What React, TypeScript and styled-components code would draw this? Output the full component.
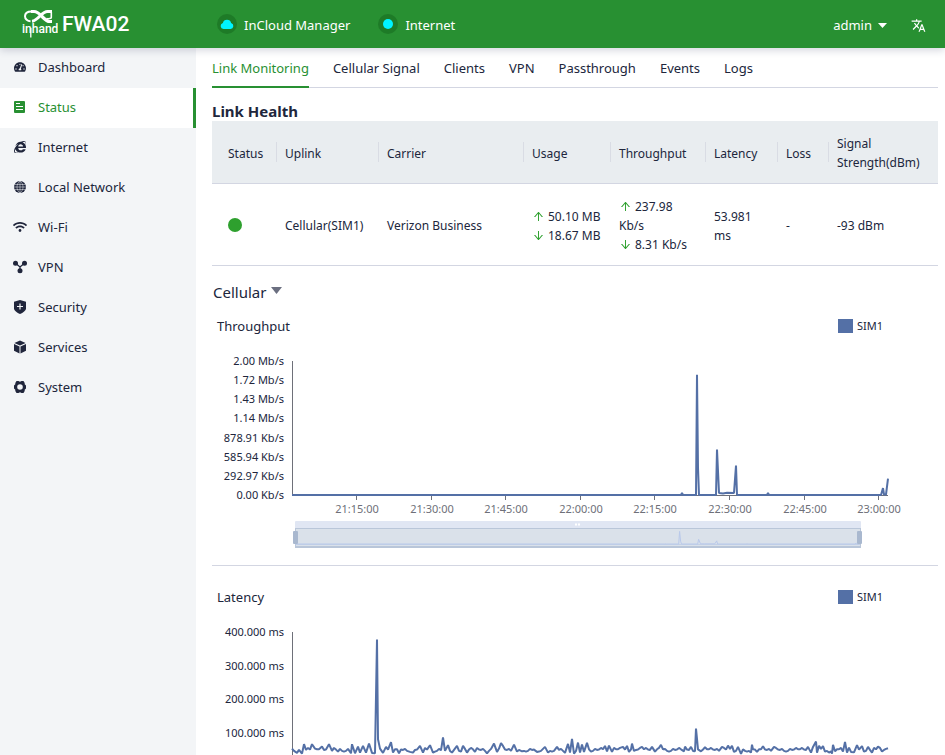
import React, { useLayoutEffect, useRef, useState } from "react";
import styled, { createGlobalStyle } from "styled-components";
import { AiOutlineArrowDown, AiOutlineArrowUp } from "react-icons/ai";
import { FaInternetExplorer, FaTachometerAlt, FaWifi } from "react-icons/fa";
import { MdTranslate } from "react-icons/md";

const color = {
  brand: "#289032",
  brandDark: "#1e7b27",
  cyan: "#00f4ff",
  ink: "#20263c",
  side: "#f3f5f7",
  line: "#d3d6e2",
  head: "#e9edf0",
  series: "#5470a6",
  axis: "#6e7079",
};

const GlobalStyle = createGlobalStyle`
  *, *::before, *::after { box-sizing: border-box; }
  body {
    margin: 0;
    background: #fff;
    color: ${color.ink};
    font: 13px/19px "Noto Sans", sans-serif;
  }
  button { font: inherit; color: inherit; background: none; border: 0; padding: 0; cursor: pointer; }
  a { color: inherit; text-decoration: none; }
`;

const Page = styled.div`
  display: flex;
  flex-direction: column;
  height: 100vh;
`;

const Header = styled.header`
  display: flex;
  align-items: center;
  flex: none;
  height: 48px;
  padding: 0 19px 0 22px;
  background: ${color.brand};
  color: #fff;
  box-shadow: 0 2px 8px rgba(30, 40, 80, 0.2);
  position: relative;
  z-index: 1;
`;

const Brand = styled.a`
  display: flex;
  align-items: center;
  gap: 4px;
  width: 195px;
`;

const Model = styled.span`
  font: 500 21px/24px Roboto, sans-serif;
`;

const Links = styled.div`
  display: flex;
  gap: 28px;
  flex: 1;
`;

const CloudLink = styled.a`
  display: flex;
  align-items: center;
  gap: 7px;
  span { padding-top: 2px; }
`;

const HeaderTools = styled.div`
  display: flex;
  align-items: center;
  gap: 24px;
  padding-top: 2px;
`;

const UserButton = styled.button`
  display: flex;
  align-items: center;
  gap: 6px;
`;

const IconButton = styled.button`
  display: flex;
`;

const Body = styled.div`
  display: flex;
  flex: 1;
  min-height: 0;
`;

const Sidebar = styled.nav`
  flex: none;
  width: 196px;
  background: ${color.side};
`;

const SideItem = styled.a<{ $active?: boolean }>`
  display: flex;
  align-items: center;
  gap: 11px;
  height: 40px;
  padding: 0 0 2px 13px;
  color: ${(p) => (p.$active ? color.brand : color.ink)};
  background: ${(p) => (p.$active ? "#fff" : "transparent")};
  border-right: 3px solid ${(p) => (p.$active ? color.brand : "transparent")};
  svg { flex: none; }
`;

const Main = styled.main`
  flex: 1;
  min-width: 0;
  padding: 0 7px 16px 16px;
  overflow-y: auto;
  scrollbar-width: none;
`;

const Tabs = styled.div`
  display: flex;
  gap: 24px;
  height: 40px;
  border-bottom: 1px solid ${color.line};
`;

const Tab = styled.button<{ $active?: boolean }>`
  height: 40px;
  padding-top: 2px;
  white-space: nowrap;
  color: ${(p) => (p.$active ? color.brand : color.ink)};
  border-bottom: 2px solid ${(p) => (p.$active ? color.brand : "transparent")};
`;

const Title = styled.h1`
  margin: 13px 0 0;
  font-size: 15px;
  line-height: 20px;
  font-weight: 700;
`;

const Table = styled.table`
  width: 100%;
  table-layout: fixed;
  border-collapse: separate;
  border-spacing: 0;
  font-size: 12px;
  text-align: left;
`;

const Th = styled.th`
  height: 63px;
  padding: 2px 8px 0 9px;
  background: linear-gradient(#d9dce4, #d9dce4) left center / 1px 20px no-repeat ${color.head};
  border-bottom: 1px solid ${color.line};
  font-weight: 400;
  &:first-child { padding-left: 16px; background: ${color.head}; }
`;

const Td = styled.td`
  height: 82px;
  padding: 2px 8px 0 9px;
  border-bottom: 1px solid ${color.line};
  &:first-child { padding: 0 8px 0 16px; }
  svg { color: #2ea02e; vertical-align: -2px; margin-right: 3px; }
`;

const Dot = styled.span`
  display: block;
  width: 14px;
  height: 14px;
  border-radius: 50%;
  background: #2ea02e;
`;

const GroupButton = styled.button`
  display: flex;
  align-items: center;
  gap: 5px;
  margin-top: 16px;
  padding-left: 1px;
  font-size: 15px;
  line-height: 20px;
  svg { margin-bottom: 3px; }
`;

const Card = styled.section`
  border-bottom: 1px solid ${color.line};
  padding-top: 14px;
  margin-bottom: 7px;
`;

const CardHead = styled.div`
  display: flex;
  justify-content: space-between;
  align-items: center;
  padding: 0 55px 0 5px;
`;

const CardTitle = styled.h2`
  margin: 0;
  font-size: 13px;
  line-height: 20px;
  font-weight: 400;
`;

const Legend = styled.button`
  display: flex;
  align-items: center;
  gap: 4px;
  font-size: 11px;
  line-height: 16px;
  &::before {
    content: "";
    width: 15px;
    height: 14px;
    background: ${color.series};
  }
`;

const Plot = styled.svg`
  display: block;
  width: 100%;
  height: 229px;
  font-size: 11px;
`;

function Logo() {
  return (
    <svg width="36" height="30" viewBox="0 0 36 30" fill="none" stroke="#fff" aria-label="inhand">
      <path d="M9.500 2.500C4.500 2.500 3 4.500 3 7.300s2.500 5 5.500 5" strokeWidth="2" />
      <path d="M9 2.500h3c4 0 6 3 8.500 5.500s4.500 4.500 7 4.500H30" strokeWidth="3.200" />
      <path d="M30 2.500h-4.500c-3 0-5 2-7.500 4.500s-5 5-8 5.300" strokeWidth="3" />
      <path d="M29.300 3v5.500c0 1-2.300 1.500-4.800 1" strokeWidth="1.600" />
      <path d="M8.800 19v9.500" strokeWidth="1.300" />
      <text x="0" y="24" fill="#fff" stroke="none" fontFamily="Roboto, sans-serif" fontSize="12" fontWeight="500">inhand</text>
    </svg>
  );
}

function Caret({ width, fill }: { width: number; fill: string }) {
  return (
    <svg width={width} height={width > 10 ? 7 : 5} viewBox="0 0 10 6" preserveAspectRatio="none" fill={fill} aria-hidden>
      <path d="M0 0h10L5 6z" />
    </svg>
  );
}

const Glyph = ({ children }: { children: React.ReactNode }) => (
  <svg width="14" height="14" viewBox="0 0 14 14" fill="currentColor" aria-hidden>
    {children}
  </svg>
);

const StatusIcon = () => (
  <Glyph>
    <rect x="1" y="1" width="11" height="12" rx="1" />
    <path d="M3 3.500h4M3 6.500h7M3 9.500h7" stroke="#fff" strokeWidth="1" />
  </Glyph>
);

const GlobeIcon = () => (
  <Glyph>
    <circle cx="7" cy="7" r="6" />
    <path d="M1.500 4.500h11M1 7h12M1.500 9.500h11M7 1v12M7 1C3 4 3 10 7 13M7 1c4 3 4 9 0 12" stroke={color.side} strokeWidth="0.5" fill="none" />
  </Glyph>
);

const VpnIcon = () => (
  <Glyph>
    <circle cx="2.500" cy="3.300" r="2.500" />
    <circle cx="11.500" cy="3.300" r="2.500" />
    <circle cx="7" cy="10.700" r="2.500" />
    <path d="M2.500 3.300L7 7l4.500-3.700M7 7v4" stroke="currentColor" strokeWidth="1.300" fill="none" />
  </Glyph>
);

const ShieldIcon = () => (
  <Glyph>
    <path d="M7 0l6 1.700v6.500c0 2.600-3 4.300-6 5.800-3-1.500-6-3.200-6-5.800V1.700z" />
    <path d="M7 3.500v6M4 6.500h6" stroke={color.side} strokeWidth="1.200" />
  </Glyph>
);

const BoxIcon = () => (
  <Glyph>
    <path d="M7 .6l5.600 2.500L7 5.600 1.400 3.100zM1 4l5.500 2.500v6.900L1 10.700zM13 4L7.500 6.500v6.900l5.500-2.700z" />
  </Glyph>
);

const GearIcon = () => (
  <Glyph>
    <path
      fillRule="evenodd"
      d="M3.500 1h2L7 1.700 8.500 1h2l1.200 2v1.300l1.300 1.200v3l-1.300 1.200V11l-1.200 2h-2L7 12.300 5.500 13h-2l-1.200-2V9.700L1 8.500v-3l1.300-1.200V3zM7 4.200a2.800 2.800 0 100 5.600 2.800 2.800 0 000-5.600z"
    />
  </Glyph>
);

const BadgeCloud = () => (
  <svg width="20" height="20" viewBox="0 0 20 20" aria-hidden>
    <circle cx="10" cy="10" r="10" fill={color.brandDark} />
    <path d="M6.500 15a3 3 0 01-.6-5.900 4.200 4.200 0 018.200 0 3 3 0 01-.6 5.900z" fill={color.cyan} />
  </svg>
);

const BadgeDot = () => (
  <svg width="20" height="20" viewBox="0 0 20 20" aria-hidden>
    <circle cx="10" cy="10" r="10" fill={color.brandDark} />
    <circle cx="10" cy="10" r="5" fill={color.cyan} />
  </svg>
);

const menu = [
  { label: "Dashboard", icon: <Glyph><FaTachometerAlt x={1} y={1} size={12} /></Glyph> },
  { label: "Status", icon: <StatusIcon />, active: true },
  { label: "Internet", icon: <Glyph><FaInternetExplorer x={1} y={1} size={12} /></Glyph> },
  { label: "Local Network", icon: <GlobeIcon /> },
  { label: "Wi-Fi", icon: <FaWifi size={14} /> },
  { label: "VPN", icon: <VpnIcon /> },
  { label: "Security", icon: <ShieldIcon /> },
  { label: "Services", icon: <BoxIcon /> },
  { label: "System", icon: <GearIcon /> },
];

const tabs = ["Link Monitoring", "Cellular Signal", "Clients", "VPN", "Passthrough", "Events", "Logs"];

const columns: [string, number][] = [
  ["Status", 64],
  ["Uplink", 102],
  ["Carrier", 145],
  ["Usage", 87],
  ["Throughput", 95],
  ["Latency", 72],
  ["Loss", 51],
  ["Signal Strength(dBm)", 110],
];

/* Samples are [slot, value]; a slot is twelve seconds and the window holds 596 of them. */
const SLOTS = 596;
type Sample = [number, number];

const throughput: Sample[] = [
  [0, 0], [389, 0], [390, 30], [391, 0], [404, 0], [405, 1840], [406, 415], [407, 0], [424, 0], [425, 695],
  [427, 32], [431, 24], [435, 34], [442, 32], [444, 450], [445, 0], [475, 0], [476, 30], [477, 0],
  [589, 0], [591, 105], [592, 8], [594, 8], [596, 250],
];

const latencyMarks: Sample[] = [
  [0, 52], [5, 39], [10, 37], [12, 65], [14, 48], [20, 65], [23, 52], [30, 58], [37, 65], [40, 45], [46, 43], [59, 38],
  [60, 65], [63, 38], [66, 58], [68, 40], [71, 60], [74, 40], [77, 67], [80, 39], [83, 38], [85, 378], [86, 80],
  [88, 52], [91, 39], [94, 57], [99, 71], [101, 40], [107, 38], [118, 42], [121, 40], [128, 60], [131, 40],
  [138, 62], [141, 40], [149, 47], [151, 85], [153, 45], [156, 62], [160, 40], [165, 60], [171, 60], [175, 40], [183, 42],
  [195, 38], [202, 67], [205, 42], [207, 52], [209, 68], [211, 60], [222, 64], [225, 43], [230, 44], [245, 42],
  [253, 57], [256, 40], [265, 57], [273, 39], [276, 66], [278, 40], [280, 81], [282, 37], [286, 70], [288, 40],
  [290, 64], [292, 42], [295, 69], [297, 50], [313, 60], [315, 44], [317, 61], [320, 42], [331, 57], [335, 60],
  [337, 42], [339, 50], [340, 67], [342, 45], [350, 57], [360, 57], [363, 43], [369, 63], [371, 50], [392, 44],
  [393, 58], [399, 57], [403, 44], [404, 112], [406, 50], [409, 44], [413, 56], [430, 57], [436, 61], [440, 60],
  [442, 42], [446, 57], [449, 36], [451, 50], [459, 40], [460, 64], [461, 50], [465, 42], [471, 59], [482, 57],
  [516, 57], [519, 40], [521, 57], [524, 73], [525, 40], [527, 60], [531, 59], [537, 40], [539, 44], [540, 37],
  [541, 63], [543, 44], [551, 43], [553, 72], [555, 40], [557, 55], [559, 42], [562, 41], [565, 62], [570, 59],
  [572, 43], [576, 57], [580, 40], [586, 58], [590, 43], [596, 53],
];

/* Fills the quiet stretches between marks with the usual small jitter. */
function withJitter(marks: Sample[]): Sample[] {
  const out: Sample[] = [];
  marks.forEach(([slot, value], i) => {
    out.push([slot, value]);
    const next = marks[i + 1];
    if (!next) return;
    for (let s = slot + 2; s < next[0] - 1; s += 2) out.push([s, 49 + ((s * s * 7) % 13) - 6]);
  });
  return out;
}

const latency = withJitter(latencyMarks);

const timeTicks = ["21:15:00", "21:30:00", "21:45:00", "22:00:00", "22:15:00", "22:30:00", "22:45:00", "23:00:00"];

interface ChartProps {
  name: string;
  samples: Sample[];
  max: number;
  labels: string[];
}

function Chart({ name, samples, max, labels }: ChartProps) {
  const ref = useRef<SVGSVGElement>(null);
  const [width, setWidth] = useState(726);

  useLayoutEffect(() => {
    const node = ref.current;
    if (!node) return;
    const measure = () => setWidth(node.clientWidth || node.getBoundingClientRect().width);
    measure();
    const observer = new ResizeObserver(measure);
    observer.observe(node);
    return () => observer.disconnect();
  }, []);

  const left = 80;
  const top = 25;
  const bottom = 159;
  const plotWidth = Math.max(width - left - 50, 100);
  const x = (slot: number) => left + (slot / SLOTS) * plotWidth;
  const y = (value: number) => bottom - (value / max) * (bottom - top);
  const points = samples.map(([s, v]) => `${x(s).toFixed(1)},${y(v).toFixed(1)}`).join(" ");

  const start = 83;
  const end = left + plotWidth - 27;
  const mini = samples
    .map(([s, v]) => `${(start + (s / SLOTS) * (end - start)).toFixed(1)},${(208 - (v / max) * 14).toFixed(1)}`)
    .join(" ");

  return (
    <Card>
      <CardHead>
        <CardTitle>{name}</CardTitle>
        <Legend>SIM1</Legend>
      </CardHead>
      <Plot ref={ref} role="img" aria-label={`${name} over time`}>
        <path d={`M${left + 0.5} ${top}V${bottom}M${left} ${bottom + 0.5}H${left + plotWidth}`} stroke={color.axis} />
        {labels.map((label, i) => (
          <text key={label} x={left - 8} y={top + 4 + ((bottom - top) * i) / (labels.length - 1)} textAnchor="end" fill={color.ink}>
            {label}
          </text>
        ))}
        {timeTicks.map((label, i) => {
          const tx = Math.round(x(64 + i * 74.6));
          return (
            <React.Fragment key={label}>
              <path d={`M${tx + 0.5} ${bottom}v5`} stroke={color.axis} />
              <text x={tx + 1} y={bottom + 18} textAnchor="middle" fill={color.axis}>{label}</text>
            </React.Fragment>
          );
        })}
        <polyline points={points} fill="none" stroke={color.series} strokeWidth="2" strokeLinejoin="bevel" />
        <rect x={start} y="185" width={end - start} height="8" rx="1" fill="#e0e6f3" />
        <rect x={start + 0.5} y="192.500" width={end - start - 1} height="19" fill="#dae1ea" stroke="#b9c6d9" />
        <path d={`M${start + 1} 208.500H${end - 1}`} stroke="#c3d0e6" />
        <polyline points={mini} fill="none" stroke="#b9c9ea" />
        <path d={`M${start} 211h${end - start}`} stroke="#b9c6d9" strokeWidth="2" />
        <path d={`M${(start + end) / 2 - 3} 188.500h6`} stroke="#fff" strokeWidth="2" strokeDasharray="2 1" />
        <rect x={start - 2} y="195" width="5" height="13" rx="1" fill="#a9b8cf" />
        <rect x={end - 4} y="195" width="5" height="13" rx="1" fill="#a9b8cf" />
      </Plot>
    </Card>
  );
}

export default function App() {
  return (
    <Page>
      <GlobalStyle />
      <Header>
        <Brand href="#home">
          <Logo />
          <Model>FWA02</Model>
        </Brand>
        <Links>
          <CloudLink href="#incloud"><BadgeCloud /><span>InCloud Manager</span></CloudLink>
          <CloudLink href="#internet-state"><BadgeDot /><span>Internet</span></CloudLink>
        </Links>
        <HeaderTools>
          <UserButton>admin <Caret width={9} fill="#fff" /></UserButton>
          <IconButton aria-label="Language"><MdTranslate size={15} /></IconButton>
        </HeaderTools>
      </Header>
      <Body>
        <Sidebar>
          {menu.map((item) => (
            <SideItem key={item.label} href={`#${item.label}`} $active={item.active}>
              {item.icon}
              {item.label}
            </SideItem>
          ))}
        </Sidebar>
        <Main>
          <Tabs role="tablist">
            {tabs.map((tab, i) => (
              <Tab key={tab} role="tab" aria-selected={i === 0} $active={i === 0}>{tab}</Tab>
            ))}
          </Tabs>
          <Title>Link Health</Title>
          <Table>
            <colgroup>
              {columns.map(([label, width]) => <col key={label} width={width} />)}
            </colgroup>
            <thead>
              <tr>{columns.map(([label]) => <Th key={label} scope="col">{label}</Th>)}</tr>
            </thead>
            <tbody>
              <tr>
                <Td><Dot role="img" aria-label="Online" /></Td>
                <Td>Cellular(SIM1)</Td>
                <Td>Verizon Business</Td>
                <Td>
                  <AiOutlineArrowUp size={13} />50.10 MB
                  <br />
                  <AiOutlineArrowDown size={13} />18.67 MB
                </Td>
                <Td>
                  <AiOutlineArrowUp size={13} />237.98 Kb/s
                  <br />
                  <AiOutlineArrowDown size={13} />8.31 Kb/s
                </Td>
                <Td>53.981 ms</Td>
                <Td>-</Td>
                <Td>-93 dBm</Td>
              </tr>
            </tbody>
          </Table>
          <GroupButton>Cellular <Caret width={11} fill="#6b6f80" /></GroupButton>
          <Chart
            name="Throughput"
            samples={throughput}
            max={2050}
            labels={["2.00 Mb/s", "1.72 Mb/s", "1.43 Mb/s", "1.14 Mb/s", "878.91 Kb/s", "585.94 Kb/s", "292.97 Kb/s", "0.00 Kb/s"]}
          />
          <Chart
            name="Latency"
            samples={latency}
            max={400}
            labels={["400.000 ms", "300.000 ms", "200.000 ms", "100.000 ms", "0.000 ms"]}
          />
        </Main>
      </Body>
    </Page>
  );
}
